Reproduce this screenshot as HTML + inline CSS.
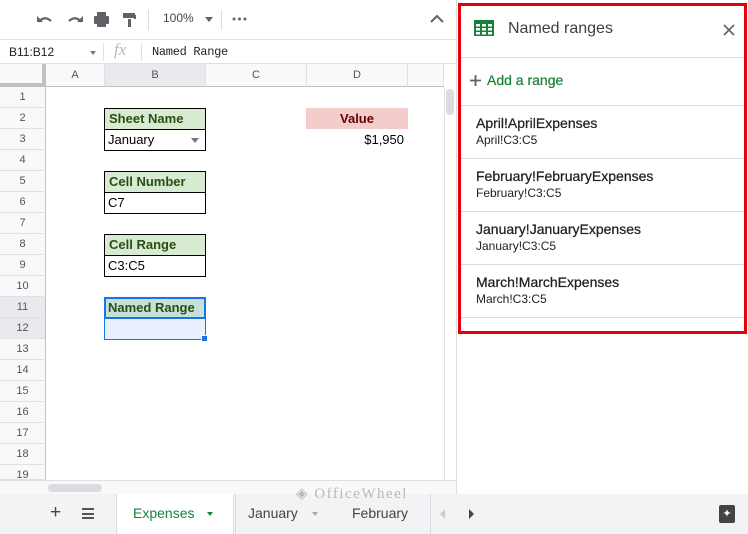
<!DOCTYPE html><html><head><style>
*{box-sizing:border-box;margin:0;padding:0}
body{width:748px;height:534px;overflow:hidden;position:relative;background:#fff;font-family:"Liberation Sans",Arial,sans-serif;}
.a{position:absolute}
.rh{position:absolute;left:0;width:46px;height:21px;background:#f8f9fa;border-bottom:1px solid #e0e0e0;border-right:1px solid #c0c0c0;font-size:11px;color:#555;text-align:center;line-height:21px}
.ch{position:absolute;top:64px;height:23px;background:#f8f9fa;border-right:1px solid #e0e0e0;border-bottom:1px solid #c0c0c0;font-size:11px;color:#555;text-align:center;line-height:22px}
.box{position:absolute;left:104px;width:102px;border:1px solid #000;font-size:13px}
.hd{height:21px;background:#d9ead3;font-weight:bold;color:#274e13;padding-left:4px;line-height:20px;border-bottom:1px solid #000}
.vl{height:20px;padding-left:3px;line-height:20px;color:#000}
.item{position:absolute;left:459px;width:286px;height:53px;border-bottom:1px solid #dadce0;padding:9px 0 0 17px}
.item b{display:block;font-weight:normal;font-size:14px;color:#202124;-webkit-text-stroke:0.25px #202124}
.item i{display:block;font-style:normal;font-size:12px;color:#202124;margin-top:2px}
</style></head><body>
<div class="a" style="left:0;top:0;width:456px;height:40px;background:#fff;border-bottom:1px solid #e0e0e0"></div>
<svg class="a" style="left:34px;top:10px" width="200" height="20" viewBox="0 0 200 20">
<path d="M5 12 Q10 5 17 11" stroke="#5f6368" stroke-width="2.2" fill="none"/><path d="M3 6v6h6" fill="#5f6368"/>
<path d="M47 12 Q42 5 35 11" stroke="#5f6368" stroke-width="2.2" fill="none"/><path d="M49 6v6h-6" fill="#5f6368"/>
<rect x="60" y="6" width="15" height="8" rx="1" fill="#5f6368"/><rect x="63" y="2" width="9" height="4" fill="#5f6368"/><rect x="63" y="12" width="9" height="5" fill="#5f6368"/>
<rect x="89" y="3" width="12" height="5" fill="#5f6368"/><rect x="100" y="5" width="2" height="4" fill="#5f6368"/><rect x="94" y="9" width="3" height="8" fill="#5f6368"/>
</svg>
<div class="a" style="left:148px;top:10px;width:1px;height:20px;background:#dadce0"></div>
<div class="a" style="left:163px;top:11px;font-size:12px;color:#444">100%</div>
<div class="a" style="left:205px;top:17px;border:4px solid transparent;border-top:5px solid #5f6368"></div>
<div class="a" style="left:221px;top:10px;width:1px;height:20px;background:#dadce0"></div>
<svg class="a" style="left:232px;top:17px" width="16" height="4"><circle cx="2" cy="2" r="1.5" fill="#5f6368"/><circle cx="7.5" cy="2" r="1.5" fill="#5f6368"/><circle cx="13" cy="2" r="1.5" fill="#5f6368"/></svg>
<svg class="a" style="left:430px;top:14px" width="14" height="10"><path d="M1 8l6-6 6 6" stroke="#5f6368" stroke-width="2" fill="none"/></svg>
<div class="a" style="left:0;top:40px;width:456px;height:24px;border-bottom:1px solid #e0e0e0"></div>
<div class="a" style="left:9px;top:45px;font-size:12px;color:#222">B11:B12</div>
<div class="a" style="left:90px;top:51px;border:3px solid transparent;border-top:4px solid #777"></div>
<div class="a" style="left:103px;top:43px;width:1px;height:18px;background:#e0e0e0"></div>
<div class="a" style="left:114px;top:40px;font-size:17px;color:#bbb;font-style:italic;font-family:'Liberation Serif',serif">fx</div>
<div class="a" style="left:141px;top:43px;width:1px;height:18px;background:#e0e0e0"></div>
<div class="a" style="left:152px;top:45px;font-size:12px;color:#222;font-family:'Liberation Mono',monospace;letter-spacing:-0.3px">Named Range</div>
<div class="a" style="left:0;top:64px;width:46px;height:23px;background:#f8f9fa;border-right:4px solid #c0c0c0;border-bottom:4px solid #c0c0c0"></div>
<div class="ch" style="left:46px;width:59px">A</div>
<div class="ch" style="left:105px;width:101px;background:#e8eaed">B</div>
<div class="ch" style="left:206px;width:101px">C</div>
<div class="ch" style="left:307px;width:101px">D</div>
<div class="ch" style="left:408px;width:36px"></div>
<div class="rh" style="top:87px">1</div><div class="rh" style="top:108px">2</div><div class="rh" style="top:129px">3</div><div class="rh" style="top:150px">4</div><div class="rh" style="top:171px">5</div><div class="rh" style="top:192px">6</div><div class="rh" style="top:213px">7</div><div class="rh" style="top:234px">8</div><div class="rh" style="top:255px">9</div><div class="rh" style="top:276px">10</div><div class="rh" style="top:297px;background:#e8eaed">11</div><div class="rh" style="top:318px;background:#e8eaed">12</div><div class="rh" style="top:339px">13</div><div class="rh" style="top:360px">14</div><div class="rh" style="top:381px">15</div><div class="rh" style="top:402px">16</div><div class="rh" style="top:423px">17</div><div class="rh" style="top:444px">18</div><div class="rh" style="top:465px;height:15px">19</div>
<div class="a" style="left:444px;top:87px;width:12px;height:393px;background:#fff;border-left:1px solid #e0e0e0"></div>
<div class="a" style="left:446px;top:89px;width:8px;height:26px;background:#dadce0;border-radius:4px"></div>
<div class="a" style="left:0;top:480px;width:456px;height:14px;background:#f8f9fa;border-top:1px solid #e0e0e0"></div>
<div class="a" style="left:48px;top:484px;width:54px;height:8px;background:#dadce0;border-radius:4px"></div>
<div class="box" style="top:108px"><div class="hd">Sheet Name</div><div class="vl">January<span style="position:absolute;left:86px;top:29px;border:4px solid transparent;border-top:5px solid #777"></span></div></div>
<div class="box" style="top:171px"><div class="hd">Cell Number</div><div class="vl">C7</div></div>
<div class="box" style="top:234px"><div class="hd">Cell Range</div><div class="vl">C3:C5</div></div>
<div class="a" style="left:104px;top:297px;width:102px;height:43px;border:1px solid #1a73e8;background:#e8f0fe"></div>
<div class="a" style="left:104px;top:297px;width:102px;height:22px;border:2px solid #1a73e8;background:#c9e0da;font-size:13px;font-weight:bold;color:#274e13;padding-left:2px;line-height:18px">Named Range</div>
<div class="a" style="left:201px;top:335px;width:7px;height:7px;background:#1a73e8;border:1px solid #fff"></div>
<div class="a" style="left:306px;top:108px;width:102px;height:21px;background:#f4cccc;color:#660000;font-weight:bold;font-size:13px;text-align:center;line-height:21px">Value</div>
<div class="a" style="left:306px;top:129px;width:98px;height:21px;font-size:13px;text-align:right;line-height:21px">$1,950</div>
<div class="a" style="left:0;top:494px;width:748px;height:40px;background:#f1f3f4"></div>
<div class="a" style="left:50px;top:502px;font-size:19px;color:#444">+</div>
<div class="a" style="left:82px;top:508px;width:12px;height:11px;border-top:2px solid #555;border-bottom:2px solid #555"><div style="margin-top:2.5px;height:2px;background:#555"></div></div>
<div class="a" style="left:116px;top:494px;width:118px;height:40px;background:#fff;border-left:1px solid #dadce0;border-right:1px solid #dadce0;"></div>
<div class="a" style="left:133px;top:505px;font-size:14px;color:#188038">Expenses</div>
<div class="a" style="left:207px;top:512px;border:3.5px solid transparent;border-top:4px solid #188038"></div>
<div class="a" style="left:248px;top:505px;font-size:14px;color:#444">January</div>
<div class="a" style="left:312px;top:512px;border:3.5px solid transparent;border-top:4px solid #aaa"></div>
<div class="a" style="left:235px;top:494px;width:1px;height:40px;background:#dadce0"></div>
<div class="a" style="left:352px;top:505px;font-size:14px;color:#444">February</div>
<div class="a" style="left:296px;top:484px;font-size:15px;color:#aaa;letter-spacing:1.5px;font-family:'Liberation Serif',serif;opacity:.8">◈ OfficeWheel</div>
<div class="a" style="left:430px;top:494px;width:1px;height:40px;background:#dadce0"></div>
<div class="a" style="left:469px;top:509px;border:5px solid transparent;border-left:5px solid #444;border-right:0"></div>
<div class="a" style="left:440px;top:509px;border:5px solid transparent;border-right:5px solid #ccc;border-left:0"></div>
<div class="a" style="left:719px;top:505px;width:16px;height:18px;background:#444;border-radius:2px;color:#fff;font-size:11px;text-align:center;line-height:18px">✦</div>
<div class="a" style="left:456px;top:0;width:292px;height:494px;background:#fff;border-left:1px solid #dadce0"></div>
<svg class="a" style="left:474px;top:20px" width="20" height="16"><rect width="20" height="16" fill="#188038"/><g fill="#fff"><rect x="2" y="4" width="4" height="2.5"/><rect x="8" y="4" width="4" height="2.5"/><rect x="14" y="4" width="4" height="2.5"/><rect x="2" y="8" width="4" height="2.5"/><rect x="8" y="8" width="4" height="2.5"/><rect x="14" y="8" width="4" height="2.5"/><rect x="2" y="12" width="4" height="2.5"/><rect x="8" y="12" width="4" height="2.5"/><rect x="14" y="12" width="4" height="2.5"/></g></svg>
<div class="a" style="left:508px;top:20px;font-size:16px;color:#3c4043">Named ranges</div>
<svg class="a" style="left:723px;top:24px" width="12" height="12"><path d="M1 1l10 10M11 1L1 11" stroke="#5f6368" stroke-width="1.6"/></svg>
<div class="a" style="left:461px;top:57px;width:284px;height:1px;background:#dadce0"></div>
<svg class="a" style="left:470px;top:75px" width="11" height="11"><path d="M5.5 0v11M0 5.5h11" stroke="#5f6368" stroke-width="1.8"/></svg>
<div class="a" style="left:487px;top:72px;font-size:14px;color:#188038;-webkit-text-stroke:0.2px #188038">Add a range</div>
<div class="a" style="left:461px;top:105px;width:284px;height:1px;background:#dadce0"></div>
<div class="item" style="top:106px"><b>April!AprilExpenses</b><i>April!C3:C5</i></div>
<div class="item" style="top:159px"><b>February!FebruaryExpenses</b><i>February!C3:C5</i></div>
<div class="item" style="top:212px"><b>January!JanuaryExpenses</b><i>January!C3:C5</i></div>
<div class="item" style="top:265px"><b>March!MarchExpenses</b><i>March!C3:C5</i></div>
<div class="a" style="left:458px;top:3px;width:289px;height:331px;border:3px solid #e8000b"></div>
</body></html>
